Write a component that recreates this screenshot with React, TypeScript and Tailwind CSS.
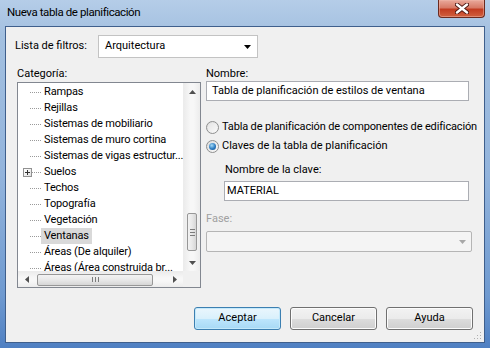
import React from "react";

const font = { fontFamily: 'Roboto, "Noto Sans", sans-serif' };

const categories = [
  { label: "Rampas" },
  { label: "Rejillas" },
  { label: "Sistemas de mobiliario" },
  { label: "Sistemas de muro cortina" },
  { label: "Sistemas de vigas estructur..." },
  { label: "Suelos", plus: true },
  { label: "Techos" },
  { label: "Topografía" },
  { label: "Vegetación" },
  { label: "Ventanas", selected: true },
  { label: "Áreas (De alquiler)" },
  { label: "Áreas (Área construida br..." },
];

function Arrow({ dir, color = "#505050" }: { dir: "up" | "down" | "left" | "right"; color?: string }) {
  const pts = {
    up: "0,4 7,4 3.5,0",
    down: "0,0 7,0 3.5,4",
    left: "4,0 4,7 0,3.5",
    right: "0,0 0,7 4,3.5",
  }[dir];
  const vert = dir === "up" || dir === "down";
  return (
    <svg width={vert ? 7 : 4} height={vert ? 4 : 7} viewBox={vert ? "0 0 7 4" : "0 0 4 7"}>
      <polygon points={pts} fill={color} />
    </svg>
  );
}

function Radio({ checked }: { checked?: boolean }) {
  return (
    <span className="flex h-[13px] w-[13px] shrink-0 items-center justify-center rounded-full border border-[#8e8f8f] bg-gradient-to-br from-[#dcdcdc] to-[#fbfbfb]">
      {checked ? (
        <span className="h-[7px] w-[7px] rounded-full bg-[radial-gradient(circle_at_40%_35%,#a6dcf8,#2c7bc0_55%,#164d86)]" />
      ) : (
        <span className="h-[9px] w-[9px] rounded-full bg-gradient-to-br from-[#e6e6e6] to-[#f8f8f8]" />
      )}
    </span>
  );
}

function Button({ label, primary }: { label: string; primary?: boolean }) {
  return (
    <button
      className={
        "flex h-[23px] w-[87px] items-center justify-center rounded-[3px] border text-[11px] text-black " +
        (primary
          ? "border-[#3c7fb1] bg-[linear-gradient(#eaf6fd,#d9f0fc_50%,#bee6fd_50%,#a7d9f5)] shadow-[inset_0_0_0_1px_#c4e9fb]"
          : "border-[#707070] bg-[linear-gradient(#f2f2f2,#ebebeb_50%,#dddddd_50%,#cfcfcf)] shadow-[inset_0_0_0_1px_#fcfcfc]")
      }
    >
      {label}
    </button>
  );
}

function TreeList() {
  return (
    <div className="grid h-[206px] w-[184px] grid-cols-[165px_17px] grid-rows-[188px_16px] border border-[#828790] bg-white">
      <div className="overflow-hidden pt-[1px]">
        {categories.map((c) => (
          <div key={c.label} className="flex h-[16px] items-center">
            <div className="flex w-[14px] shrink-0 justify-end">
              {c.plus && (
                <span className="relative flex h-[9px] w-[9px] items-center justify-center border border-[#919191] bg-gradient-to-br from-white to-[#e2e2e2]">
                  <span className="absolute h-[1px] w-[5px] bg-[#333]" />
                  <span className="absolute h-[5px] w-[1px] bg-[#333]" />
                </span>
              )}
            </div>
            <div
              className={
                (c.plus ? "w-[9px]" : "ml-[-2px] w-[11px]") + " shrink-0 border-t border-dotted border-[#9a9a9a]"
              }
            />
            <span
              className={
                "shrink-0 whitespace-nowrap px-[3px] text-[11px] leading-[16px] tracking-[-0.15px] text-black " +
                (c.selected ? "bg-[#d9d9d9]" : "")
              }
            >
              {c.label}
            </span>
          </div>
        ))}
      </div>
      {/* vertical scrollbar */}
      <div className="flex flex-col border-l border-[#ececec] bg-[linear-gradient(90deg,#ececec,#f7f7f7_40%,#f7f7f7_60%,#ececec)]">
        <div className="flex h-[17px] items-center justify-center">
          <Arrow dir="up" />
        </div>
        <div className="mx-[3px] mt-[113px] flex h-[38px] flex-col items-center justify-center gap-[2px] rounded-[2px] border border-[#979797] bg-[linear-gradient(90deg,#f3f3f3,#e8e8e8_50%,#d6d6d6)]">
          <span className="h-[1px] w-[5px] bg-[#7b7b7b]" />
          <span className="h-[1px] w-[5px] bg-[#7b7b7b]" />
          <span className="h-[1px] w-[5px] bg-[#7b7b7b]" />
        </div>
        <div className="mt-auto flex h-[17px] items-center justify-center">
          <Arrow dir="down" />
        </div>
      </div>
      {/* horizontal scrollbar */}
      <div className="flex items-center border-t border-[#ececec] bg-[linear-gradient(#ececec,#f7f7f7_40%,#f7f7f7_60%,#ececec)]">
        <div className="flex w-[17px] items-center justify-center">
          <Arrow dir="left" />
        </div>
        <div className="ml-[2px] flex h-[12px] w-[116px] items-center justify-center gap-[2px] rounded-[2px] border border-[#979797] bg-[linear-gradient(#f3f3f3,#e8e8e8_50%,#d6d6d6)]">
          <span className="h-[5px] w-[1px] bg-[#7b7b7b]" />
          <span className="h-[5px] w-[1px] bg-[#7b7b7b]" />
          <span className="h-[5px] w-[1px] bg-[#7b7b7b]" />
        </div>
        <div className="ml-auto flex w-[17px] items-center justify-center">
          <Arrow dir="right" />
        </div>
      </div>
      <div className="bg-[#f0f0f0]" />
    </div>
  );
}

export default function App() {
  return (
    <div
      className="flex h-[348px] w-[490px] flex-col overflow-hidden bg-[linear-gradient(#b5cde8,#a3c0e0_10%,#93b4dc_50%,#6f9ad0_85%,#4f80c2)]"
      style={font}
    >
      {/* title bar */}
      <div className="flex h-[26px] shrink-0 items-start justify-between">
        <span className="pl-[7px] pt-[4px] text-[11.5px] leading-[16px] tracking-[-0.4px] text-black">
          Nueva tabla de planificación
        </span>
        <div className="mr-[5px] flex h-[18px] w-[47px] items-center justify-center rounded-b-[4px] border border-t-0 border-[#6b2a1f] bg-[linear-gradient(#e9a99b,#d77a66_45%,#c23c21_55%,#d0603f)] shadow-[inset_0_0_0_1px_#f0b8aa80]">
          <svg width="14" height="11" viewBox="0 0 14 11">
            <path d="M2 1.5 L12 9.5 M12 1.5 L2 9.5" stroke="#4a1510" strokeWidth="4.2" strokeLinecap="round" />
            <path d="M2 1.5 L12 9.5 M12 1.5 L2 9.5" stroke="#ffffff" strokeWidth="2.4" strokeLinecap="round" />
          </svg>
        </div>
      </div>

      {/* client area */}
      <div className="relative mx-[5px] mb-[5px] flex flex-1 flex-col border border-[#3f5f8c] bg-[#f0f0f0] px-[9px] pt-[8px] text-[11px] text-black">
        <div className="flex h-[23px] items-center">
          <span className="w-[83px]">Lista de filtros:</span>
          <div className="flex h-[23px] w-[160px] items-center justify-between border border-[#c3c3c3] bg-white pl-[6px] pr-[6px]">
            <span>Arquitectura</span>
            <Arrow dir="down" color="#000" />
          </div>
        </div>

        <div className="mt-[8px] flex gap-[5px] pl-[2px]">
          <div className="flex flex-col">
            <span className="h-[16px] leading-[16px]">Categoría:</span>
            <TreeList />
          </div>

          <div className="flex flex-col">
            <span className="h-[15px] leading-[15px]">Nombre:</span>
            <div className="flex h-[20px] w-[263px] items-center border border-[#abadb3] bg-white pl-[5px]">
              Tabla de planificación de estilos de ventana
            </div>
            <div className="mt-[17px] flex h-[19px] items-center gap-[3px]">
              <Radio />
              <span className="whitespace-nowrap tracking-[-0.15px]">
                Tabla de planificación de componentes de edificación
              </span>
            </div>
            <div className="flex h-[19px] items-center gap-[3px]">
              <Radio checked />
              <span>Claves de la tabla de planificación</span>
            </div>
            <span className="ml-[19px] mt-[6px] h-[16px] leading-[16px]">Nombre de la clave:</span>
            <div className="ml-[18px] mt-[3px] flex h-[20px] w-[245px] items-center border border-[#abadb3] bg-white pl-[2px]">
              MATERIAL
            </div>
            <span className="mt-[10px] h-[16px] leading-[16px] text-[#a0a0a0]">Fase:</span>
            <div className="mt-[4px] flex h-[21px] w-[266px] items-center justify-end rounded-[2px] border border-[#b5b5b5] bg-[#f4f4f4] pr-[5px]">
              <Arrow dir="down" color="#a8a8a8" />
            </div>
          </div>
        </div>

        <div className="mr-[2px] mt-[19px] flex justify-end gap-[9px]">
          <Button label="Aceptar" primary />
          <Button label="Cancelar" />
          <Button label="Ayuda" />
        </div>

        {/* size grip */}
        <svg className="absolute bottom-[2px] right-[2px]" width="8" height="8" viewBox="0 0 8 8">
          <rect x="6" y="0" width="1" height="1" fill="#b0b0b0" />
          <rect x="3" y="3" width="1" height="1" fill="#b0b0b0" />
          <rect x="6" y="3" width="1" height="1" fill="#b0b0b0" />
          <rect x="0" y="6" width="1" height="1" fill="#b0b0b0" />
          <rect x="3" y="6" width="1" height="1" fill="#b0b0b0" />
          <rect x="6" y="6" width="1" height="1" fill="#b0b0b0" />
        </svg>
      </div>
    </div>
  );
}
